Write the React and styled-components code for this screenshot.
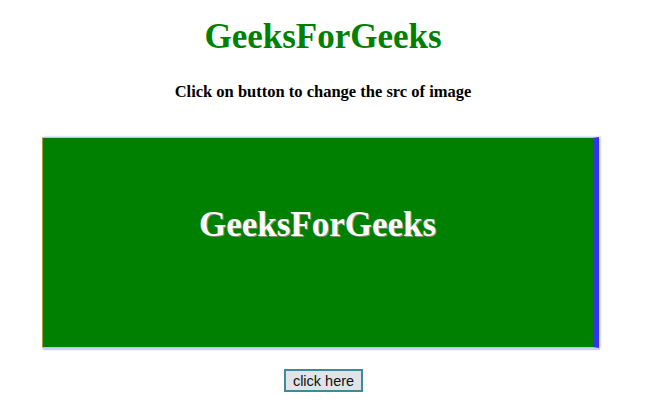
import styled, { createGlobalStyle } from 'styled-components'

const Global = createGlobalStyle`
  html, body {
    margin: 0;
    padding: 0;
    background: #ffffff;
  }
`

const Page = styled.div`
  display: flex;
  flex-direction: column;
  align-items: center;
  width: 653px;
  height: 414px;
  box-sizing: border-box;
  padding: 16px 7px 0 0;
  font-family: "Liberation Serif", "Times New Roman", serif;
`

const Title = styled.h1`
  margin: 0;
  font-size: 35px;
  line-height: 42px;
  font-weight: bold;
  color: #008000;
`

const Subtitle = styled.h3`
  margin: 24px 0 0 0;
  font-size: 16.5px;
  line-height: 20px;
  font-weight: bold;
  color: #000;
`

const Banner = styled.div`
  margin: 35px 6px 0 0;
  width: 550px;
  height: 209px;
  box-sizing: content-box;
  background: #008000;
  border-left: 1px solid #a89a2a;
  border-right: 6px solid #3333f2;
  border-top: 1px solid #b7c2f5;
  border-bottom: 1px solid #b7c2f5;
  box-shadow: 1px 2px 1px #c9d0f5, 2px -1px 1px #e4e8f8;
  display: flex;
  align-items: flex-start;
  justify-content: center;
`

const BannerText = styled.span`
  margin-top: 67px;
  font-size: 35px;
  line-height: 40px;
  font-weight: bold;
  color: #ffffff;
  text-shadow: 1px 1px 0 #8a8f7a;
`

const Button = styled.button`
  margin: 21px 0 0 1px;
  padding: 0 7px;
  height: 23px;
  font-family: "Liberation Sans", Arial, sans-serif;
  font-size: 14.5px;
  color: #111;
  background: #dfe4e8;
  border: 2px solid #3d8a9b;
  border-radius: 0;
`

export default function App() {
  return (
    <>
      <Global />
      <Page>
        <Title>GeeksForGeeks</Title>
        <Subtitle>Click on button to change the src of image</Subtitle>
        <Banner>
          <BannerText>GeeksForGeeks</BannerText>
        </Banner>
        <Button>click here</Button>
      </Page>
    </>
  )
}
